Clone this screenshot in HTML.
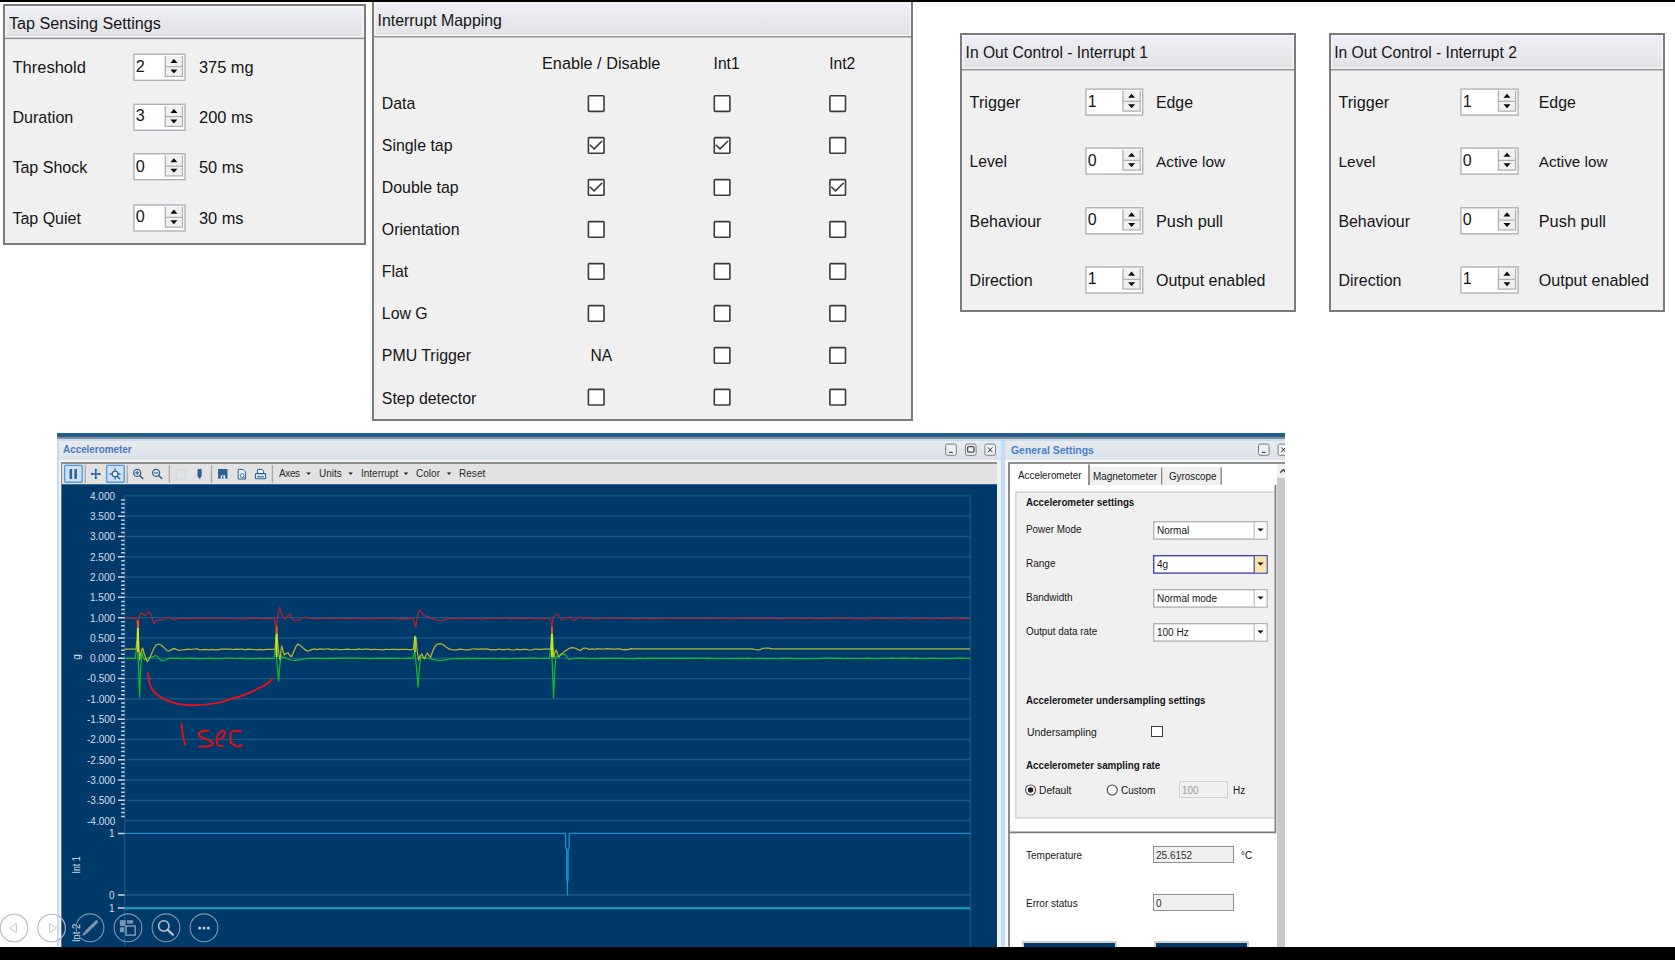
<!DOCTYPE html>
<html><head><meta charset="utf-8"><title>Sensor UI</title>
<style>
html,body{margin:0;padding:0;background:#fff;}
body{width:1675px;height:960px;position:relative;overflow:hidden;font-family:"Liberation Sans",sans-serif;}
.abs{position:absolute;}
.t{position:absolute;white-space:nowrap;line-height:20px;font-family:"Liberation Sans",sans-serif;}
.panel{position:absolute;box-sizing:border-box;border:2px solid #7b7b7b;background:#f0f0f0;}
</style></head><body>
<!-- top panels -->
<div class="panel" style="left:3px;top:4px;width:363px;height:241px;"></div>
<div class="panel" style="left:372px;top:0px;width:541px;height:421px;"></div>
<div class="panel" style="left:960px;top:33px;width:336px;height:279px;"></div>
<div class="panel" style="left:1329px;top:33px;width:336px;height:279px;"></div>
<svg class="abs" style="left:0;top:0" width="1675" height="430" viewBox="0 0 1675 430"><defs><linearGradient id="hg" x1="0" y1="0" x2="0" y2="1"><stop offset="0" stop-color="#eef0f7"/><stop offset="0.5" stop-color="#e8e9ee"/><stop offset="1" stop-color="#e2e2e4"/></linearGradient></defs><rect x="5" y="6" width="359" height="31.70" fill="url(#hg)"/>
<rect x="5.75" y="6.75" width="357.5" height="30.20" fill="none" stroke="#f5f5f8" stroke-width="1.5"/>
<rect x="5" y="37.70" width="359" height="1.4" fill="#8f8f8f"/>
<rect x="133.90" y="54.30" width="51.10" height="26.00" fill="#fff" stroke="#b0b2b8" stroke-width="1.4"/>
<rect x="164.80" y="55.90" width="18.20" height="21.10" fill="#f0f0f0"/>
<path d="M165.30 55.90V76.40H182.50V55.90 M164.80 66.65H183.00" fill="none" stroke="#b2b2b2" stroke-width="1.3"/>
<path d="M170.40 62.95L173.90 58.85L177.40 62.95Z M170.40 69.45L173.90 73.45L177.40 69.45Z" fill="#0c0c0c"/>
<rect x="133.90" y="104.30" width="51.10" height="26.00" fill="#fff" stroke="#b0b2b8" stroke-width="1.4"/>
<rect x="164.80" y="105.90" width="18.20" height="21.10" fill="#f0f0f0"/>
<path d="M165.30 105.90V126.40H182.50V105.90 M164.80 116.65H183.00" fill="none" stroke="#b2b2b2" stroke-width="1.3"/>
<path d="M170.40 112.95L173.90 108.85L177.40 112.95Z M170.40 119.45L173.90 123.45L177.40 119.45Z" fill="#0c0c0c"/>
<rect x="133.90" y="153.70" width="51.10" height="26.00" fill="#fff" stroke="#b0b2b8" stroke-width="1.4"/>
<rect x="164.80" y="155.30" width="18.20" height="21.10" fill="#f0f0f0"/>
<path d="M165.30 155.30V175.80H182.50V155.30 M164.80 166.05H183.00" fill="none" stroke="#b2b2b2" stroke-width="1.3"/>
<path d="M170.40 162.35L173.90 158.25L177.40 162.35Z M170.40 168.85L173.90 172.85L177.40 168.85Z" fill="#0c0c0c"/>
<rect x="133.90" y="205.00" width="51.10" height="26.00" fill="#fff" stroke="#b0b2b8" stroke-width="1.4"/>
<rect x="164.80" y="206.60" width="18.20" height="21.10" fill="#f0f0f0"/>
<path d="M165.30 206.60V227.10H182.50V206.60 M164.80 217.35H183.00" fill="none" stroke="#b2b2b2" stroke-width="1.3"/>
<path d="M170.40 213.65L173.90 209.55L177.40 213.65Z M170.40 220.15L173.90 224.15L177.40 220.15Z" fill="#0c0c0c"/>
<rect x="374" y="2" width="537" height="34.10" fill="url(#hg)"/>
<rect x="374.75" y="2.75" width="535.5" height="32.60" fill="none" stroke="#f5f5f8" stroke-width="1.5"/>
<rect x="374" y="36.10" width="537" height="1.4" fill="#8f8f8f"/>
<rect x="588.40" y="95.80" width="15.60" height="15.60" rx="0.8" fill="#fff" stroke="#3b3b3b" stroke-width="1.6"/>
<rect x="714.30" y="95.80" width="15.60" height="15.60" rx="0.8" fill="#fff" stroke="#3b3b3b" stroke-width="1.6"/>
<rect x="829.90" y="95.80" width="15.60" height="15.60" rx="0.8" fill="#fff" stroke="#3b3b3b" stroke-width="1.6"/>
<rect x="588.40" y="137.60" width="15.60" height="15.60" rx="0.8" fill="#fff" stroke="#3b3b3b" stroke-width="1.6"/>
<path d="M590.30 145.20L594.10 148.90L601.80 141.30" fill="none" stroke="#3b3b3b" stroke-width="1.6" stroke-linecap="round" stroke-linejoin="round"/>
<rect x="714.30" y="137.60" width="15.60" height="15.60" rx="0.8" fill="#fff" stroke="#3b3b3b" stroke-width="1.6"/>
<path d="M716.20 145.20L720.00 148.90L727.70 141.30" fill="none" stroke="#3b3b3b" stroke-width="1.6" stroke-linecap="round" stroke-linejoin="round"/>
<rect x="829.90" y="137.60" width="15.60" height="15.60" rx="0.8" fill="#fff" stroke="#3b3b3b" stroke-width="1.6"/>
<rect x="588.40" y="179.60" width="15.60" height="15.60" rx="0.8" fill="#fff" stroke="#3b3b3b" stroke-width="1.6"/>
<path d="M590.30 187.20L594.10 190.90L601.80 183.30" fill="none" stroke="#3b3b3b" stroke-width="1.6" stroke-linecap="round" stroke-linejoin="round"/>
<rect x="714.30" y="179.60" width="15.60" height="15.60" rx="0.8" fill="#fff" stroke="#3b3b3b" stroke-width="1.6"/>
<rect x="829.90" y="179.60" width="15.60" height="15.60" rx="0.8" fill="#fff" stroke="#3b3b3b" stroke-width="1.6"/>
<path d="M831.80 187.20L835.60 190.90L843.30 183.30" fill="none" stroke="#3b3b3b" stroke-width="1.6" stroke-linecap="round" stroke-linejoin="round"/>
<rect x="588.40" y="221.60" width="15.60" height="15.60" rx="0.8" fill="#fff" stroke="#3b3b3b" stroke-width="1.6"/>
<rect x="714.30" y="221.60" width="15.60" height="15.60" rx="0.8" fill="#fff" stroke="#3b3b3b" stroke-width="1.6"/>
<rect x="829.90" y="221.60" width="15.60" height="15.60" rx="0.8" fill="#fff" stroke="#3b3b3b" stroke-width="1.6"/>
<rect x="588.40" y="263.60" width="15.60" height="15.60" rx="0.8" fill="#fff" stroke="#3b3b3b" stroke-width="1.6"/>
<rect x="714.30" y="263.60" width="15.60" height="15.60" rx="0.8" fill="#fff" stroke="#3b3b3b" stroke-width="1.6"/>
<rect x="829.90" y="263.60" width="15.60" height="15.60" rx="0.8" fill="#fff" stroke="#3b3b3b" stroke-width="1.6"/>
<rect x="588.40" y="305.60" width="15.60" height="15.60" rx="0.8" fill="#fff" stroke="#3b3b3b" stroke-width="1.6"/>
<rect x="714.30" y="305.60" width="15.60" height="15.60" rx="0.8" fill="#fff" stroke="#3b3b3b" stroke-width="1.6"/>
<rect x="829.90" y="305.60" width="15.60" height="15.60" rx="0.8" fill="#fff" stroke="#3b3b3b" stroke-width="1.6"/>
<rect x="714.30" y="347.60" width="15.60" height="15.60" rx="0.8" fill="#fff" stroke="#3b3b3b" stroke-width="1.6"/>
<rect x="829.90" y="347.60" width="15.60" height="15.60" rx="0.8" fill="#fff" stroke="#3b3b3b" stroke-width="1.6"/>
<rect x="588.40" y="389.40" width="15.60" height="15.60" rx="0.8" fill="#fff" stroke="#3b3b3b" stroke-width="1.6"/>
<rect x="714.30" y="389.40" width="15.60" height="15.60" rx="0.8" fill="#fff" stroke="#3b3b3b" stroke-width="1.6"/>
<rect x="829.90" y="389.40" width="15.60" height="15.60" rx="0.8" fill="#fff" stroke="#3b3b3b" stroke-width="1.6"/>
<rect x="962" y="35" width="332" height="34.00" fill="url(#hg)"/>
<rect x="962.75" y="35.75" width="330.5" height="32.50" fill="none" stroke="#f5f5f8" stroke-width="1.5"/>
<rect x="962" y="69.00" width="332" height="1.4" fill="#8f8f8f"/>
<rect x="1085.90" y="89.10" width="56.80" height="26.00" fill="#fff" stroke="#b0b2b8" stroke-width="1.4"/>
<rect x="1122.50" y="90.70" width="18.20" height="21.10" fill="#f0f0f0"/>
<path d="M1123.00 90.70V111.20H1140.20V90.70 M1122.50 101.45H1140.70" fill="none" stroke="#b2b2b2" stroke-width="1.3"/>
<path d="M1128.10 97.75L1131.60 93.65L1135.10 97.75Z M1128.10 104.25L1131.60 108.25L1135.10 104.25Z" fill="#0c0c0c"/>
<rect x="1085.90" y="148.10" width="56.80" height="26.00" fill="#fff" stroke="#b0b2b8" stroke-width="1.4"/>
<rect x="1122.50" y="149.70" width="18.20" height="21.10" fill="#f0f0f0"/>
<path d="M1123.00 149.70V170.20H1140.20V149.70 M1122.50 160.45H1140.70" fill="none" stroke="#b2b2b2" stroke-width="1.3"/>
<path d="M1128.10 156.75L1131.60 152.65L1135.10 156.75Z M1128.10 163.25L1131.60 167.25L1135.10 163.25Z" fill="#0c0c0c"/>
<rect x="1085.90" y="207.80" width="56.80" height="26.00" fill="#fff" stroke="#b0b2b8" stroke-width="1.4"/>
<rect x="1122.50" y="209.40" width="18.20" height="21.10" fill="#f0f0f0"/>
<path d="M1123.00 209.40V229.90H1140.20V209.40 M1122.50 220.15H1140.70" fill="none" stroke="#b2b2b2" stroke-width="1.3"/>
<path d="M1128.10 216.45L1131.60 212.35L1135.10 216.45Z M1128.10 222.95L1131.60 226.95L1135.10 222.95Z" fill="#0c0c0c"/>
<rect x="1085.90" y="267.00" width="56.80" height="26.00" fill="#fff" stroke="#b0b2b8" stroke-width="1.4"/>
<rect x="1122.50" y="268.60" width="18.20" height="21.10" fill="#f0f0f0"/>
<path d="M1123.00 268.60V289.10H1140.20V268.60 M1122.50 279.35H1140.70" fill="none" stroke="#b2b2b2" stroke-width="1.3"/>
<path d="M1128.10 275.65L1131.60 271.55L1135.10 275.65Z M1128.10 282.15L1131.60 286.15L1135.10 282.15Z" fill="#0c0c0c"/>
<rect x="1331" y="35" width="332" height="34.00" fill="url(#hg)"/>
<rect x="1331.75" y="35.75" width="330.5" height="32.50" fill="none" stroke="#f5f5f8" stroke-width="1.5"/>
<rect x="1331" y="69.00" width="332" height="1.4" fill="#8f8f8f"/>
<rect x="1460.90" y="89.10" width="57.20" height="26.00" fill="#fff" stroke="#b0b2b8" stroke-width="1.4"/>
<rect x="1497.90" y="90.70" width="18.20" height="21.10" fill="#f0f0f0"/>
<path d="M1498.40 90.70V111.20H1515.60V90.70 M1497.90 101.45H1516.10" fill="none" stroke="#b2b2b2" stroke-width="1.3"/>
<path d="M1503.50 97.75L1507.00 93.65L1510.50 97.75Z M1503.50 104.25L1507.00 108.25L1510.50 104.25Z" fill="#0c0c0c"/>
<rect x="1460.90" y="148.10" width="57.20" height="26.00" fill="#fff" stroke="#b0b2b8" stroke-width="1.4"/>
<rect x="1497.90" y="149.70" width="18.20" height="21.10" fill="#f0f0f0"/>
<path d="M1498.40 149.70V170.20H1515.60V149.70 M1497.90 160.45H1516.10" fill="none" stroke="#b2b2b2" stroke-width="1.3"/>
<path d="M1503.50 156.75L1507.00 152.65L1510.50 156.75Z M1503.50 163.25L1507.00 167.25L1510.50 163.25Z" fill="#0c0c0c"/>
<rect x="1460.90" y="207.80" width="57.20" height="26.00" fill="#fff" stroke="#b0b2b8" stroke-width="1.4"/>
<rect x="1497.90" y="209.40" width="18.20" height="21.10" fill="#f0f0f0"/>
<path d="M1498.40 209.40V229.90H1515.60V209.40 M1497.90 220.15H1516.10" fill="none" stroke="#b2b2b2" stroke-width="1.3"/>
<path d="M1503.50 216.45L1507.00 212.35L1510.50 216.45Z M1503.50 222.95L1507.00 226.95L1510.50 222.95Z" fill="#0c0c0c"/>
<rect x="1460.90" y="267.00" width="57.20" height="26.00" fill="#fff" stroke="#b0b2b8" stroke-width="1.4"/>
<rect x="1497.90" y="268.60" width="18.20" height="21.10" fill="#f0f0f0"/>
<path d="M1498.40 268.60V289.10H1515.60V268.60 M1497.90 279.35H1516.10" fill="none" stroke="#b2b2b2" stroke-width="1.3"/>
<path d="M1503.50 275.65L1507.00 271.55L1510.50 275.65Z M1503.50 282.15L1507.00 286.15L1510.50 282.15Z" fill="#0c0c0c"/></svg>
<span class="t" style="left:9.00px;top:14px;font-size:16.18px;line-height:18px;color:#151515;">Tap Sensing Settings</span>
<span class="t" style="left:12.40px;top:58px;font-size:16.55px;line-height:19px;color:#151515;">Threshold</span>
<span class="t" style="left:135.80px;top:57px;font-size:16.20px;line-height:18px;color:#151515;">2</span>
<span class="t" style="left:199.00px;top:58px;font-size:16.37px;line-height:18px;color:#151515;">375 mg</span>
<span class="t" style="left:12.40px;top:108px;font-size:16.14px;line-height:18px;color:#151515;">Duration</span>
<span class="t" style="left:135.80px;top:106px;font-size:16.20px;line-height:18px;color:#151515;">3</span>
<span class="t" style="left:199.00px;top:108px;font-size:16.47px;line-height:18px;color:#151515;">200 ms</span>
<span class="t" style="left:12.40px;top:158px;font-size:16.06px;line-height:18px;color:#151515;">Tap Shock</span>
<span class="t" style="left:135.80px;top:157px;font-size:16.20px;line-height:18px;color:#151515;">0</span>
<span class="t" style="left:199.00px;top:158px;font-size:16.38px;line-height:18px;color:#151515;">50 ms</span>
<span class="t" style="left:12.40px;top:209px;font-size:16.03px;line-height:18px;color:#151515;">Tap Quiet</span>
<span class="t" style="left:135.80px;top:207px;font-size:16.20px;line-height:18px;color:#151515;">0</span>
<span class="t" style="left:199.00px;top:209px;font-size:16.38px;line-height:18px;color:#151515;">30 ms</span>
<span class="t" style="left:377.60px;top:12px;font-size:15.87px;line-height:17px;color:#151515;">Interrupt Mapping</span>
<span class="t" style="left:542.00px;top:54px;font-size:16.26px;line-height:18px;color:#151515;">Enable / Disable</span>
<span class="t" style="left:713.60px;top:55px;font-size:15.60px;line-height:17px;color:#151515;">Int1</span>
<span class="t" style="left:829.20px;top:55px;font-size:15.60px;line-height:17px;color:#151515;">Int2</span>
<span class="t" style="left:381.80px;top:95px;font-size:15.90px;line-height:17px;color:#151515;">Data</span>
<span class="t" style="left:381.80px;top:137px;font-size:15.90px;line-height:17px;color:#151515;">Single tap</span>
<span class="t" style="left:381.80px;top:179px;font-size:15.90px;line-height:17px;color:#151515;">Double tap</span>
<span class="t" style="left:381.80px;top:221px;font-size:15.90px;line-height:17px;color:#151515;">Orientation</span>
<span class="t" style="left:381.80px;top:263px;font-size:15.90px;line-height:17px;color:#151515;">Flat</span>
<span class="t" style="left:381.80px;top:305px;font-size:15.90px;line-height:17px;color:#151515;">Low G</span>
<span class="t" style="left:381.80px;top:347px;font-size:15.90px;line-height:17px;color:#151515;">PMU Trigger</span>
<span class="t" style="left:590.40px;top:347px;font-size:15.60px;line-height:17px;color:#151515;">NA</span>
<span class="t" style="left:381.80px;top:390px;font-size:15.90px;line-height:17px;color:#151515;">Step detector</span>
<span class="t" style="left:965.60px;top:44px;font-size:15.63px;line-height:17px;color:#151515;">In Out Control - Interrupt 1</span>
<span class="t" style="left:969.60px;top:93px;font-size:16.23px;line-height:18px;color:#151515;">Trigger</span>
<span class="t" style="left:1087.80px;top:93px;font-size:16.00px;line-height:17px;color:#151515;">1</span>
<span class="t" style="left:1156.00px;top:94px;font-size:15.84px;line-height:17px;color:#151515;">Edge</span>
<span class="t" style="left:969.60px;top:153px;font-size:15.64px;line-height:17px;color:#151515;">Level</span>
<span class="t" style="left:1087.80px;top:152px;font-size:16.00px;line-height:17px;color:#151515;">0</span>
<span class="t" style="left:1156.00px;top:153px;font-size:15.33px;line-height:17px;color:#151515;">Active low</span>
<span class="t" style="left:969.60px;top:213px;font-size:15.95px;line-height:17px;color:#151515;">Behaviour</span>
<span class="t" style="left:1087.80px;top:211px;font-size:16.00px;line-height:17px;color:#151515;">0</span>
<span class="t" style="left:1156.00px;top:212px;font-size:16.29px;line-height:18px;color:#151515;">Push pull</span>
<span class="t" style="left:969.60px;top:272px;font-size:15.97px;line-height:17px;color:#151515;">Direction</span>
<span class="t" style="left:1087.80px;top:270px;font-size:16.00px;line-height:17px;color:#151515;">1</span>
<span class="t" style="left:1156.00px;top:271px;font-size:16.03px;line-height:18px;color:#151515;">Output enabled</span>
<span class="t" style="left:1334.20px;top:44px;font-size:15.66px;line-height:17px;color:#151515;">In Out Control - Interrupt 2</span>
<span class="t" style="left:1338.40px;top:93px;font-size:16.23px;line-height:18px;color:#151515;">Trigger</span>
<span class="t" style="left:1462.80px;top:93px;font-size:16.00px;line-height:17px;color:#151515;">1</span>
<span class="t" style="left:1538.70px;top:94px;font-size:15.93px;line-height:17px;color:#151515;">Edge</span>
<span class="t" style="left:1338.40px;top:153px;font-size:15.56px;line-height:17px;color:#151515;">Level</span>
<span class="t" style="left:1462.80px;top:152px;font-size:16.00px;line-height:17px;color:#151515;">0</span>
<span class="t" style="left:1538.70px;top:153px;font-size:15.31px;line-height:17px;color:#151515;">Active low</span>
<span class="t" style="left:1338.40px;top:213px;font-size:15.90px;line-height:17px;color:#151515;">Behaviour</span>
<span class="t" style="left:1462.80px;top:211px;font-size:16.00px;line-height:17px;color:#151515;">0</span>
<span class="t" style="left:1538.70px;top:212px;font-size:16.36px;line-height:18px;color:#151515;">Push pull</span>
<span class="t" style="left:1338.40px;top:272px;font-size:15.97px;line-height:17px;color:#151515;">Direction</span>
<span class="t" style="left:1462.80px;top:270px;font-size:16.00px;line-height:17px;color:#151515;">1</span>
<span class="t" style="left:1538.70px;top:271px;font-size:16.13px;line-height:18px;color:#151515;">Output enabled</span>
<!-- bottom window -->
<div class="abs" style="left:57px;top:433px;width:1228px;height:4.4px;background:#1f5e8e;"></div>
<div class="abs" style="left:57px;top:437.2px;width:1228px;height:1.6px;background:#8c8f92;"></div>
<div class="abs" style="left:57px;top:438.8px;width:1228px;height:2.4px;background:#c3dcfb;"></div>
<div class="abs" style="left:57px;top:441px;width:1228px;height:19px;background:linear-gradient(#e8ebef,#dbe2ea);"></div>
<div class="abs" style="left:57px;top:460px;width:1228px;height:487px;background:#f4f4f4;"></div>
<div class="abs" style="left:57px;top:439px;width:1.8px;height:508px;background:#c3dcfb;"></div>
<div class="abs" style="left:58.8px;top:460px;width:2.2px;height:487px;background:#f3f3f3;"></div>
<!-- toolbar + chart -->
<div class="abs" style="left:61px;top:462.4px;width:936.4px;height:22px;background:#e2e2e2;border-top:2px solid #8d8d8d;border-left:1px solid #868686;box-sizing:border-box;"></div>
<div class="abs" style="left:61px;top:484px;width:936.4px;height:463px;background:#003a6b;border-left:1.4px solid #5a7690;box-sizing:border-box;"></div>
<div class="abs" style="left:62px;top:484px;width:935px;height:1.2px;background:#3a6890;"></div>
<svg class="abs" style="left:0;top:0" width="1675" height="960" viewBox="0 0 1675 960">
<path d="M124.6 495.90H970.4 M124.6 516.19H970.4 M124.6 536.49H970.4 M124.6 556.78H970.4 M124.6 577.08H970.4 M124.6 597.37H970.4 M124.6 617.66H970.4 M124.6 637.96H970.4 M124.6 658.25H970.4 M124.6 678.54H970.4 M124.6 698.84H970.4 M124.6 719.13H970.4 M124.6 739.42H970.4 M124.6 759.72H970.4 M124.6 780.01H970.4 M124.6 800.31H970.4 M124.6 820.60H970.4" stroke="#1e5883" stroke-width="1.3" fill="none"/>
<path d="M124.7 496V947 M970.2 496V947" stroke="#1f5a8a" stroke-width="1.1" fill="none"/>
<path d="M124.6 895H970.4" stroke="#1e5883" stroke-width="1.3" fill="none"/>
<path d="M121.2 499.96H124.6 M121.2 504.02H124.6 M121.2 508.08H124.6 M121.2 512.13H124.6 M121.2 520.25H124.6 M121.2 524.31H124.6 M121.2 528.37H124.6 M121.2 532.43H124.6 M121.2 540.55H124.6 M121.2 544.61H124.6 M121.2 548.66H124.6 M121.2 552.72H124.6 M121.2 560.84H124.6 M121.2 564.90H124.6 M121.2 568.96H124.6 M121.2 573.02H124.6 M121.2 581.13H124.6 M121.2 585.19H124.6 M121.2 589.25H124.6 M121.2 593.31H124.6 M121.2 601.43H124.6 M121.2 605.49H124.6 M121.2 609.54H124.6 M121.2 613.60H124.6 M121.2 621.72H124.6 M121.2 625.78H124.6 M121.2 629.84H124.6 M121.2 633.90H124.6 M121.2 642.01H124.6 M121.2 646.07H124.6 M121.2 650.13H124.6 M121.2 654.19H124.6 M121.2 662.31H124.6 M121.2 666.37H124.6 M121.2 670.43H124.6 M121.2 674.49H124.6 M121.2 682.60H124.6 M121.2 686.66H124.6 M121.2 690.72H124.6 M121.2 694.78H124.6 M121.2 702.90H124.6 M121.2 706.95H124.6 M121.2 711.01H124.6 M121.2 715.07H124.6 M121.2 723.19H124.6 M121.2 727.25H124.6 M121.2 731.31H124.6 M121.2 735.37H124.6 M121.2 743.48H124.6 M121.2 747.54H124.6 M121.2 751.60H124.6 M121.2 755.66H124.6 M121.2 763.78H124.6 M121.2 767.84H124.6 M121.2 771.89H124.6 M121.2 775.95H124.6 M121.2 784.07H124.6 M121.2 788.13H124.6 M121.2 792.19H124.6 M121.2 796.25H124.6 M121.2 804.37H124.6 M121.2 808.42H124.6 M121.2 812.48H124.6 M121.2 816.54H124.6" stroke="#ccd8e4" stroke-width="1.5" fill="none"/>
<path d="M117.9 516.19H124.6 M117.9 536.49H124.6 M117.9 556.78H124.6 M117.9 577.08H124.6 M117.9 597.37H124.6 M117.9 617.66H124.6 M117.9 637.96H124.6 M117.9 658.25H124.6 M117.9 678.54H124.6 M117.9 698.84H124.6 M117.9 719.13H124.6 M117.9 739.42H124.6 M117.9 759.72H124.6 M117.9 780.01H124.6 M117.9 800.31H124.6" stroke="#ccd8e4" stroke-width="1.5" fill="none"/>
<path d="M117.9 833.4H124.6 M117.9 895H124.6 M117.9 908H124.6" stroke="#ccd8e4" stroke-width="1.5" fill="none"/>
<path d="M124.6 618.0 L135.5 618.0 L136.6 621.0 L137.4 626.5 L139.0 618.0 L141.0 612.5 L143.0 614.0 L145.0 615.5 L147.0 613.5 L149.0 611.6 L151.0 614.0 L152.5 620.0 L154.0 623.4 L156.0 621.0 L158.0 620.5 L161.0 619.6 L164.0 620.0 L168.0 617.0 L171.0 618.6 L175.0 619.6 L178.0 618.6 L181.0 618.4 L184.0 618.3 L187.0 618.8 L190.0 618.2 L193.0 618.6 L196.0 618.5 L199.0 618.2 L202.0 618.6 L205.0 618.1 L208.0 618.5 L211.0 618.2 L214.0 618.2 L217.0 618.5 L220.0 618.9 L223.0 618.2 L226.0 618.3 L229.0 618.7 L232.0 619.0 L235.0 618.7 L238.0 618.5 L241.0 619.1 L244.0 618.1 L247.0 619.0 L250.0 618.4 L253.0 618.2 L256.0 618.2 L259.0 618.4 L262.0 618.9 L265.0 618.3 L268.0 618.7 L271.0 618.7 L274.0 618.0 L275.4 624.0 L276.4 629.0 L277.6 616.0 L279.6 607.6 L281.4 613.0 L283.0 617.0 L285.0 619.0 L287.6 616.0 L290.0 614.0 L292.0 618.0 L294.0 620.8 L297.0 620.4 L300.0 619.4 L303.0 618.0 L306.0 617.0 L310.0 618.2 L315.0 618.8 L318.0 618.4 L321.0 618.5 L324.0 618.1 L327.0 618.1 L330.0 618.2 L333.0 618.7 L336.0 618.4 L339.0 618.3 L342.0 618.6 L345.0 618.5 L348.0 618.3 L351.0 618.8 L354.0 618.7 L357.0 618.2 L360.0 618.6 L363.0 618.5 L366.0 618.9 L369.0 618.7 L372.0 618.3 L375.0 619.0 L378.0 618.1 L381.0 618.4 L384.0 618.8 L387.0 618.2 L390.0 618.5 L393.0 618.0 L396.0 618.7 L399.0 618.8 L402.0 618.6 L405.0 618.9 L408.0 618.3 L411.0 618.7 L413.0 618.0 L414.6 623.0 L415.8 627.4 L417.0 617.0 L419.4 610.0 L421.0 611.6 L423.0 614.4 L425.4 616.0 L428.0 616.6 L431.0 618.4 L435.0 619.4 L438.0 620.0 L442.0 621.0 L445.0 619.6 L448.0 618.4 L451.0 618.6 L454.0 618.6 L457.0 618.5 L460.0 618.8 L463.0 618.9 L466.0 618.5 L469.0 618.7 L472.0 618.1 L475.0 618.7 L478.0 618.6 L481.0 619.0 L484.0 618.8 L487.0 618.3 L490.0 618.4 L493.0 618.7 L496.0 618.0 L499.0 618.5 L502.0 618.2 L505.0 618.1 L508.0 618.1 L511.0 618.8 L514.0 618.1 L517.0 618.2 L520.0 618.4 L523.0 618.9 L526.0 618.1 L529.0 618.4 L532.0 618.5 L535.0 618.9 L538.0 618.8 L541.0 618.9 L544.0 618.3 L547.0 618.4 L549.0 618.0 L550.6 621.0 L551.8 626.0 L553.0 619.0 L555.0 614.6 L557.0 614.0 L559.0 616.0 L561.0 619.4 L563.0 620.0 L566.0 618.4 L570.0 617.0 L572.0 619.0 L574.0 620.8 L577.0 618.0 L579.0 617.0 L583.0 618.4 L588.0 617.6 L591.0 618.3 L594.0 618.7 L597.0 618.8 L600.0 618.1 L603.0 618.1 L606.0 618.2 L609.0 618.2 L612.0 618.4 L615.0 618.5 L618.0 618.2 L621.0 618.0 L624.0 618.3 L627.0 618.3 L630.0 618.5 L633.0 618.8 L636.0 618.6 L639.0 618.4 L642.0 618.5 L645.0 618.6 L648.0 618.0 L651.0 618.8 L654.0 618.7 L657.0 618.7 L660.0 618.7 L663.0 618.3 L666.0 618.3 L669.0 618.0 L672.0 618.5 L675.0 618.0 L678.0 618.0 L681.0 618.1 L684.0 618.1 L687.0 618.3 L690.0 618.0 L693.0 618.0 L696.0 618.1 L699.0 618.0 L702.0 618.3 L705.0 618.0 L708.0 618.7 L711.0 618.5 L714.0 618.1 L717.0 618.2 L720.0 618.3 L723.0 618.3 L726.0 618.1 L729.0 618.7 L732.0 618.8 L735.0 618.4 L738.0 618.4 L741.0 618.0 L744.0 618.0 L747.0 618.3 L750.0 618.2 L753.0 618.7 L756.0 618.1 L759.0 618.0 L762.0 618.8 L765.0 618.4 L768.0 618.1 L771.0 618.4 L774.0 618.0 L777.0 618.4 L780.0 618.8 L783.0 618.7 L786.0 618.6 L789.0 618.2 L792.0 618.3 L795.0 618.1 L798.0 618.6 L801.0 618.4 L804.0 618.7 L807.0 618.2 L810.0 618.2 L813.0 618.7 L816.0 618.8 L819.0 618.7 L822.0 618.7 L825.0 618.7 L828.0 618.6 L831.0 618.2 L834.0 618.4 L837.0 618.3 L840.0 618.0 L843.0 618.0 L846.0 618.2 L849.0 618.2 L852.0 618.6 L855.0 618.8 L858.0 618.4 L861.0 618.8 L864.0 618.8 L867.0 618.8 L870.0 618.3 L873.0 618.1 L876.0 618.2 L879.0 618.1 L882.0 618.1 L885.0 618.5 L888.0 618.8 L891.0 618.7 L894.0 618.4 L897.0 618.5 L900.0 618.7 L903.0 618.0 L906.0 618.5 L909.0 618.8 L912.0 618.7 L915.0 618.6 L918.0 618.4 L921.0 618.1 L924.0 618.7 L927.0 618.2 L930.0 618.7 L933.0 618.8 L936.0 618.3 L939.0 618.3 L942.0 618.8 L945.0 618.6 L948.0 618.1 L951.0 618.1 L954.0 618.1 L957.0 618.8 L960.0 618.7 L963.0 618.1 L966.0 618.7 L970.2 618.4" stroke="#b5202f" stroke-width="1.25" fill="none" stroke-linejoin="round"/>
<path d="M124.6 658.4 L135.4 658.4 L136.4 648.0 L137.2 640.0 L138.2 660.0 L139.6 697.0 L140.6 670.0 L142.0 652.0 L143.4 658.0 L145.0 660.0 L148.0 658.0 L152.0 657.0 L155.0 655.6 L157.0 656.0 L159.4 659.0 L162.0 661.0 L165.0 660.0 L168.0 658.6 L172.0 658.0 L175.0 658.3 L179.0 658.1 L183.0 658.6 L187.0 658.3 L191.0 658.2 L195.0 658.4 L199.0 658.6 L203.0 658.6 L207.0 658.3 L211.0 658.2 L215.0 658.7 L219.0 658.4 L223.0 658.5 L227.0 658.2 L231.0 658.1 L235.0 658.5 L239.0 658.4 L243.0 658.1 L247.0 658.7 L251.0 658.5 L255.0 658.6 L259.0 658.2 L263.0 658.6 L267.0 658.1 L271.0 658.6 L274.0 658.4 L275.0 650.0 L275.8 645.0 L276.8 660.0 L278.6 681.0 L279.6 668.0 L281.0 655.0 L282.4 658.0 L284.0 657.0 L287.0 658.6 L291.0 660.0 L295.0 660.4 L300.0 659.6 L305.0 659.0 L310.0 658.4 L313.0 658.4 L317.0 658.3 L321.0 658.4 L325.0 658.7 L329.0 658.3 L333.0 658.2 L337.0 658.4 L341.0 658.2 L345.0 658.2 L349.0 658.2 L353.0 658.1 L357.0 658.2 L361.0 658.3 L365.0 658.3 L369.0 658.6 L373.0 658.3 L377.0 658.4 L381.0 658.2 L385.0 658.3 L389.0 658.1 L393.0 658.3 L397.0 658.1 L401.0 658.5 L405.0 658.4 L409.0 658.2 L413.0 658.4 L414.0 654.0 L414.8 651.0 L416.0 662.0 L418.0 687.0 L419.0 672.0 L420.6 656.0 L422.0 658.0 L425.0 657.6 L430.0 658.6 L435.0 659.8 L440.0 660.6 L445.0 659.8 L450.0 659.0 L456.0 658.6 L460.0 658.4 L464.0 658.7 L468.0 658.2 L472.0 658.6 L476.0 658.4 L480.0 658.4 L484.0 658.6 L488.0 658.3 L492.0 658.4 L496.0 658.5 L500.0 658.7 L504.0 658.3 L508.0 658.6 L512.0 658.5 L516.0 658.5 L520.0 658.3 L524.0 658.3 L528.0 658.1 L532.0 658.2 L536.0 658.1 L540.0 658.5 L544.0 658.3 L549.6 658.4 L550.4 650.0 L551.2 645.0 L552.2 662.0 L553.6 698.0 L554.6 672.0 L556.0 656.0 L558.0 657.0 L561.0 655.0 L565.0 654.4 L567.0 657.0 L568.6 659.4 L572.0 659.0 L576.0 658.4 L580.0 658.2 L584.0 658.2 L588.0 658.6 L592.0 658.6 L596.0 658.5 L600.0 658.3 L604.0 658.2 L608.0 658.3 L612.0 658.4 L616.0 658.2 L620.0 658.4 L624.0 658.3 L628.0 658.7 L632.0 658.7 L636.0 658.4 L640.0 658.2 L644.0 658.7 L648.0 658.3 L652.0 658.3 L656.0 658.1 L660.0 658.3 L664.0 658.4 L668.0 658.4 L672.0 658.2 L676.0 658.4 L680.0 658.1 L684.0 658.3 L688.0 658.2 L692.0 658.3 L696.0 658.1 L700.0 658.1 L704.0 658.3 L708.0 658.2 L712.0 658.5 L716.0 658.4 L720.0 658.6 L724.0 658.5 L728.0 658.5 L732.0 658.6 L736.0 658.3 L740.0 658.3 L744.0 658.7 L748.0 658.2 L752.0 658.5 L756.0 658.5 L760.0 658.1 L764.0 658.6 L768.0 658.6 L772.0 658.5 L776.0 658.5 L780.0 658.6 L784.0 658.2 L788.0 658.4 L792.0 658.4 L796.0 658.6 L800.0 658.6 L804.0 658.6 L808.0 658.5 L812.0 658.6 L816.0 658.5 L820.0 658.5 L824.0 658.2 L828.0 658.1 L832.0 658.2 L836.0 658.3 L840.0 658.2 L844.0 658.6 L848.0 658.4 L852.0 658.5 L856.0 658.5 L860.0 658.5 L864.0 658.4 L868.0 658.1 L872.0 658.6 L876.0 658.5 L880.0 658.4 L884.0 658.4 L888.0 658.5 L892.0 658.1 L896.0 658.5 L900.0 658.3 L904.0 658.1 L908.0 658.3 L912.0 658.5 L916.0 658.2 L920.0 658.5 L924.0 658.7 L928.0 658.4 L932.0 658.3 L936.0 658.4 L940.0 658.5 L944.0 658.6 L948.0 658.5 L952.0 658.5 L956.0 658.1 L960.0 658.2 L964.0 658.3 L968.0 658.5 L970.2 658.4" stroke="#12be28" stroke-width="1.2" fill="none" stroke-linejoin="round"/>
<path d="M124.6 649.2 L136.0 649.2 L137.0 640.0 L137.8 621.0 L138.6 640.0 L139.6 660.0 L141.0 652.0 L142.6 648.0 L144.0 653.0 L145.6 658.0 L147.2 661.6 L149.0 659.6 L151.0 655.0 L153.6 649.0 L156.0 645.0 L158.4 644.0 L161.0 645.0 L164.0 647.6 L167.0 650.6 L169.0 651.0 L171.6 649.6 L174.0 648.4 L177.0 649.6 L179.0 650.4 L182.0 650.0 L185.0 649.6 L188.0 649.2 L191.0 649.5 L194.0 649.0 L197.0 648.8 L200.0 650.0 L203.0 649.6 L206.0 649.4 L209.0 649.9 L212.0 649.3 L215.0 649.8 L218.0 649.8 L221.0 649.1 L224.0 649.1 L227.0 649.2 L230.0 649.1 L233.0 649.5 L236.0 649.1 L239.0 649.3 L242.0 649.0 L245.0 649.9 L248.0 649.2 L251.0 649.3 L254.0 649.5 L257.0 649.9 L260.0 649.3 L263.0 649.9 L266.0 649.4 L269.0 649.4 L272.0 649.4 L275.0 649.2 L275.8 640.0 L276.6 627.0 L277.4 640.0 L279.0 655.0 L280.0 660.0 L281.0 650.0 L281.8 646.0 L283.0 651.0 L284.2 655.0 L286.0 653.4 L288.0 653.0 L290.0 655.6 L291.6 656.6 L293.6 652.0 L296.0 646.4 L298.0 644.0 L300.4 645.6 L303.0 648.0 L306.0 650.4 L308.4 651.2 L311.0 649.8 L314.0 648.8 L317.0 649.6 L320.0 648.8 L323.0 649.3 L326.0 649.0 L329.0 648.8 L332.0 649.8 L335.0 649.0 L338.0 649.4 L341.0 649.7 L344.0 649.5 L347.0 649.2 L350.0 649.4 L353.0 649.5 L356.0 649.7 L359.0 648.9 L362.0 649.5 L365.0 649.1 L368.0 649.1 L371.0 649.7 L374.0 649.4 L377.0 649.5 L380.0 649.7 L383.0 649.9 L386.0 649.3 L389.0 649.5 L392.0 649.4 L395.0 649.4 L398.0 649.6 L401.0 649.3 L404.0 649.4 L407.0 649.4 L410.0 649.9 L413.4 649.2 L414.2 642.0 L415.0 636.0 L416.0 638.0 L417.0 650.0 L418.6 660.0 L420.0 656.0 L422.0 654.0 L423.2 657.0 L424.4 659.0 L426.0 655.0 L427.4 653.0 L429.0 655.6 L430.6 657.4 L432.4 652.0 L434.6 647.0 L437.0 644.4 L440.0 643.6 L443.0 644.6 L446.0 647.0 L448.6 648.6 L451.0 649.6 L454.0 649.9 L457.0 649.9 L460.0 649.1 L463.0 649.5 L466.0 649.9 L469.0 649.8 L472.0 649.0 L475.0 648.9 L478.0 649.3 L481.0 648.9 L484.0 649.1 L487.0 648.9 L490.0 649.6 L493.0 649.7 L496.0 649.9 L499.0 649.0 L502.0 649.7 L505.0 649.6 L508.0 649.0 L511.0 649.9 L514.0 650.0 L517.0 649.1 L520.0 649.9 L523.0 649.3 L526.0 649.4 L529.0 650.0 L532.0 649.8 L535.0 649.0 L538.0 649.3 L541.0 649.4 L544.0 649.2 L547.0 649.0 L550.4 649.2 L551.2 640.0 L552.0 627.0 L552.8 642.0 L553.8 658.0 L555.0 652.0 L556.2 650.0 L557.6 654.0 L559.0 657.0 L561.0 654.0 L563.0 653.0 L566.0 650.4 L569.0 648.4 L572.0 647.6 L575.0 648.0 L578.0 649.6 L580.4 650.4 L583.0 648.4 L586.0 648.0 L589.0 649.4 L592.0 648.9 L595.0 649.3 L598.0 648.6 L601.0 649.2 L604.0 649.0 L607.0 648.6 L610.0 648.9 L613.0 649.2 L616.0 649.1 L619.0 648.6 L622.0 649.6 L625.0 649.4 L628.0 649.6 L631.0 648.7 L634.0 648.9 L752.0 648.9 L755.0 649.5 L757.5 649.9 L760.0 649.6 L763.0 648.3 L766.0 648.0 L769.0 648.2 L771.5 648.8 L774.0 648.8 L970.2 648.8" stroke="#b6b534" stroke-width="1.25" fill="none" stroke-linejoin="round"/>
<path d="M138 621V628" stroke="#e8541c" stroke-width="1.8" fill="none"/>
<path d="M138 628V652" stroke="#c8f020" stroke-width="1.8" fill="none"/>
<path d="M276.6 627V634" stroke="#e8541c" stroke-width="1.8" fill="none"/>
<path d="M276.6 634V657" stroke="#c8f020" stroke-width="1.8" fill="none"/>
<path d="M552 627V634" stroke="#e8541c" stroke-width="1.8" fill="none"/>
<path d="M552 634V657" stroke="#c8f020" stroke-width="1.8" fill="none"/>
<path d="M415 637V652" stroke="#c8f020" stroke-width="1.5" fill="none"/>
<path d="M124.6 833.4H565.6V847.4L566.7 849.2V880.4L567.4 881.4V895V881.4L568.1 880.4V849.2L569.2 847.4V833.4H970.4" stroke="#1791cd" stroke-width="1.3" fill="none" stroke-linejoin="round"/>
<path d="M124.6 908.2H970.4" stroke="#10a4c2" stroke-width="2" fill="none"/>
<path d="M148 673 C148.5 680 150 688 155 693 C162 699 172 704 186 705 C198 705.6 210 704.6 220 702.4 C226 701.4 228 699 234 698 C244 696 254 690.6 264 685.6 C268 683.4 271 681 272.4 678.6" stroke="#e5121a" stroke-width="1.9" fill="none" stroke-linecap="round" stroke-linejoin="round"/>
<path d="M181.6 724 C182 730 183 738 185 744.6 M208.1 730.8 C205 730.4 201 731 199.2 732.8 C197.6 735 200 737 203 738 C207 739.4 212 741 213 743.6 C213 746 209 746.6 199.6 746.5 M219.4 739.6 C222 738.4 224.4 736 224.8 733.4 C225 731 223.6 730.4 222 731.2 C219.4 732.6 217 736 216.6 739.6 C216.4 743 217.6 745.4 220 746 C221.4 746.2 222 746 222.8 746 M241.2 731.5 C238 730.6 234 730.6 231.8 732 C230 734 230.2 738 230.6 741.6 C231 744 233 744.6 234.4 745 C235.6 746.4 237 746.8 239 746.2 C240.4 745.8 241 745.6 241.8 745.3" stroke="#e60f14" stroke-width="2.0" fill="none" stroke-linecap="round" stroke-linejoin="round"/>
</svg>
<span class="t" style="left:89.90px;top:491px;font-size:10.47px;line-height:11px;color:#d3dde8;transform:scaleX(0.9575);transform-origin:0 0;">4.000</span>
<span class="t" style="left:89.90px;top:511px;font-size:10.47px;line-height:11px;color:#d3dde8;transform:scaleX(0.9575);transform-origin:0 0;">3.500</span>
<span class="t" style="left:89.90px;top:531px;font-size:10.47px;line-height:11px;color:#d3dde8;transform:scaleX(0.9575);transform-origin:0 0;">3.000</span>
<span class="t" style="left:89.90px;top:552px;font-size:10.47px;line-height:11px;color:#d3dde8;transform:scaleX(0.9575);transform-origin:0 0;">2.500</span>
<span class="t" style="left:89.90px;top:572px;font-size:10.47px;line-height:11px;color:#d3dde8;transform:scaleX(0.9575);transform-origin:0 0;">2.000</span>
<span class="t" style="left:89.90px;top:592px;font-size:10.47px;line-height:11px;color:#d3dde8;transform:scaleX(0.9575);transform-origin:0 0;">1.500</span>
<span class="t" style="left:89.90px;top:613px;font-size:10.47px;line-height:11px;color:#d3dde8;transform:scaleX(0.9575);transform-origin:0 0;">1.000</span>
<span class="t" style="left:89.90px;top:633px;font-size:10.47px;line-height:11px;color:#d3dde8;transform:scaleX(0.9575);transform-origin:0 0;">0.500</span>
<span class="t" style="left:89.90px;top:653px;font-size:10.47px;line-height:11px;color:#d3dde8;transform:scaleX(0.9575);transform-origin:0 0;">0.000</span>
<span class="t" style="left:86.56px;top:673px;font-size:10.47px;line-height:11px;color:#d3dde8;transform:scaleX(0.9575);transform-origin:0 0;">-0.500</span>
<span class="t" style="left:86.56px;top:694px;font-size:10.47px;line-height:11px;color:#d3dde8;transform:scaleX(0.9575);transform-origin:0 0;">-1.000</span>
<span class="t" style="left:86.56px;top:714px;font-size:10.47px;line-height:11px;color:#d3dde8;transform:scaleX(0.9575);transform-origin:0 0;">-1.500</span>
<span class="t" style="left:86.56px;top:734px;font-size:10.47px;line-height:11px;color:#d3dde8;transform:scaleX(0.9575);transform-origin:0 0;">-2.000</span>
<span class="t" style="left:86.56px;top:755px;font-size:10.47px;line-height:11px;color:#d3dde8;transform:scaleX(0.9575);transform-origin:0 0;">-2.500</span>
<span class="t" style="left:86.56px;top:775px;font-size:10.47px;line-height:11px;color:#d3dde8;transform:scaleX(0.9575);transform-origin:0 0;">-3.000</span>
<span class="t" style="left:86.56px;top:795px;font-size:10.47px;line-height:11px;color:#d3dde8;transform:scaleX(0.9575);transform-origin:0 0;">-3.500</span>
<span class="t" style="left:86.56px;top:816px;font-size:10.47px;line-height:11px;color:#d3dde8;transform:scaleX(0.9575);transform-origin:0 0;">-4.000</span>
<span class="t" style="left:109.42px;top:828px;font-size:10.47px;line-height:11px;color:#d3dde8;transform:scaleX(0.9575);transform-origin:0 0;">1</span>
<span class="t" style="left:109.42px;top:890px;font-size:10.47px;line-height:11px;color:#d3dde8;transform:scaleX(0.9575);transform-origin:0 0;">0</span>
<span class="t" style="left:109.42px;top:903px;font-size:10.47px;line-height:11px;color:#d3dde8;transform:scaleX(0.9575);transform-origin:0 0;">1</span>
<span class="t" style="left:76.5px;top:656.6px;font-size:10px;color:#d3dde8;transform:translate(-50%,-50%) rotate(-90deg) scaleX(1);">g</span>
<span class="t" style="left:76.5px;top:865.2px;font-size:10.4px;color:#d3dde8;transform:translate(-50%,-50%) rotate(-90deg) scaleX(0.84);">Int 1</span>
<span class="t" style="left:76.5px;top:933.1px;font-size:10.4px;color:#d3dde8;transform:translate(-50%,-50%) rotate(-90deg) scaleX(0.9);">Int 2</span>
<!-- divider -->
<div class="abs" style="left:997.4px;top:460px;width:4px;height:487px;background:#f2f1f1;"></div>
<div class="abs" style="left:1001.3px;top:441px;width:4.2px;height:506px;background:#c2dcfb;"></div>
<div class="abs" style="left:1005.5px;top:460px;width:3px;height:487px;background:#fafafa;"></div>
<!-- general settings content -->
<div class="abs" style="left:1008px;top:462.4px;width:277px;height:485px;background:#fff;border-top:2px solid #8f8f8f;border-left:2px solid #8b8b8b;box-sizing:border-box;"></div>
<svg class="abs" style="left:0;top:0" width="1675" height="960" viewBox="0 0 1675 960">
<rect x="64.6" y="465.4" width="17.6" height="16.8" rx="1" fill="#cfe0f1" stroke="#4e9ce0" stroke-width="1.4"/>
<rect x="106.60000000000001" y="465.4" width="17.6" height="16.8" rx="1" fill="#cfe0f1" stroke="#4e9ce0" stroke-width="1.4"/>
<path d="M85.3 465.2V483" stroke="#a9a9a9" stroke-width="1.3"/>
<path d="M127.3 465.2V483" stroke="#a9a9a9" stroke-width="1.3"/>
<path d="M169.4 465.2V483" stroke="#a9a9a9" stroke-width="1.3"/>
<path d="M211.5 465.2V483" stroke="#a9a9a9" stroke-width="1.3"/>
<path d="M272.4 465.2V483" stroke="#a9a9a9" stroke-width="1.3"/>
<rect x="69.6" y="469" width="2.5" height="10" fill="#2d6295"/><rect x="74.4" y="469" width="2.5" height="10" fill="#2d6295"/>
<path d="M95.8 469.6V478.2 M91.6 473.9H100" stroke="#2d6295" stroke-width="1.5" stroke-linecap="round"/>
<path d="M94.8 470.5L95.8 469.4L96.8 470.5 M94.8 477.3L95.8 478.4L96.8 477.3 M92.7 472.9L91.6 473.9L92.7 474.9 M98.9 472.9L100 473.9L98.9 474.9" stroke="#2d6295" stroke-width="1.1" fill="none"/>
<circle cx="115.1" cy="474" r="2.9" fill="#dfeaf6" stroke="#2d6295" stroke-width="1.2"/>
<path d="M115.1 468.9V470.3 M115.1 477.7V478.9 M110.2 474H111.6 M118.6 474H120 M117.3 476.3L119.7 478.7" stroke="#2d6295" stroke-width="1.3" stroke-linecap="round"/>
<circle cx="137.2" cy="472.9" r="3.5" fill="none" stroke="#2d6295" stroke-width="1.3"/>
<path d="M139.79999999999998 475.6L142.79999999999998 478.4" stroke="#2d6295" stroke-width="1.5" stroke-linecap="round"/>
<path d="M135.39999999999998 472.9H139.0" stroke="#2d6295" stroke-width="1.1"/>
<path d="M137.2 471.1V474.7" stroke="#2d6295" stroke-width="1.1"/>
<circle cx="156.1" cy="472.9" r="3.5" fill="none" stroke="#2d6295" stroke-width="1.3"/>
<path d="M158.7 475.6L161.7 478.4" stroke="#2d6295" stroke-width="1.5" stroke-linecap="round"/>
<path d="M154.29999999999998 472.9H157.9" stroke="#2d6295" stroke-width="1.1"/>
<rect x="176.3" y="469.5" width="9.2" height="9.4" rx="0.8" fill="none" stroke="#cbd6e3" stroke-width="1.1"/>
<path d="M197.5 469H201.7V476L199.6 479.2L197.5 476Z" fill="#2d6295"/>
<path d="M218 469H227.5V478.6H218Z" fill="#2d6295"/><rect x="220.8" y="475.4" width="4.4" height="3.4" fill="#e8eef4"/><rect x="222" y="476.2" width="1.5" height="2.4" fill="#2d6295"/>
<path d="M238.2 469.4H243L245.6 472V479H238.2Z" fill="#e6edf4" stroke="#2d6295" stroke-width="1"/><circle cx="242.2" cy="475.6" r="1.9" fill="#f4f6f8" stroke="#2d6295" stroke-width="0.9"/><path d="M243.6 477L245.8 479.2" stroke="#2d6295" stroke-width="1"/>
<path d="M257.6 473.4V469.4H262L263.6 471V473.4" fill="#f0f4f8" stroke="#2d6295" stroke-width="1"/><rect x="255.4" y="473.6" width="10.2" height="5.2" rx="0.8" fill="#e6edf4" stroke="#2d6295" stroke-width="1.1"/><path d="M257 476.8H264" stroke="#2d6295" stroke-width="1.1"/>
<path d="M306.3 472.6H310.90000000000003L308.6 475Z" fill="#222"/>
<path d="M348.3 472.6H352.90000000000003L350.6 475Z" fill="#222"/>
<path d="M403.7 472.6H408.3L406 475Z" fill="#222"/>
<path d="M446.7 472.6H451.3L449 475Z" fill="#222"/>
<rect x="945.7" y="444.1" width="10.6" height="11.2" rx="1.6" fill="#eef1f5" stroke="#7e7e7e" stroke-width="1"/>
<path d="M949.2 452.4H952.8000000000001" stroke="#4a4a4a" stroke-width="1.2"/>
<rect x="965.5" y="444.1" width="10.6" height="11.2" rx="1.6" fill="#eef1f5" stroke="#7e7e7e" stroke-width="1"/>
<rect x="967.6" y="446.6" width="6.4" height="5.6" rx="1.2" fill="none" stroke="#4a4a4a" stroke-width="1.3"/>
<rect x="984.9" y="444.1" width="10.6" height="11.2" rx="1.6" fill="#eef1f5" stroke="#7e7e7e" stroke-width="1"/>
<path d="M988.0 447.4L992.4 452.2 M992.4 447.4L988.0 452.2" stroke="#3a3a3a" stroke-width="1"/>
<rect x="1258.5" y="444.1" width="10.6" height="11.2" rx="1.6" fill="#eef1f5" stroke="#7e7e7e" stroke-width="1"/>
<path d="M1262 452.4H1265.6" stroke="#4a4a4a" stroke-width="1.2"/>
<rect x="1278.1" y="444.1" width="10.6" height="11.2" rx="1.6" fill="#eef1f5" stroke="#7e7e7e" stroke-width="1"/>
<path d="M1281.1999999999998 447.4L1285.6 452.2 M1285.6 447.4L1281.1999999999998 452.2" stroke="#3a3a3a" stroke-width="1"/>
</svg>
<div class="abs" style="left:1090px;top:467.4px;width:71px;height:17.6px;background:#f0f0f0;"></div>
<div class="abs" style="left:1163px;top:467.4px;width:58px;height:17.6px;background:#f0f0f0;"></div>
<div class="abs" style="left:1015.2px;top:491.6px;width:259.6px;height:326.8px;background:#f0f0f0;"></div>
<svg class="abs" style="left:0;top:0" width="1675" height="960" viewBox="0 0 1675 960">
<path d="M1089 464.6V485" stroke="#6f6f6f" stroke-width="1.5"/>
<path d="M1161.7 467.4V484.8 M1221.2 467.4V484.8" stroke="#8a8a8a" stroke-width="1.4"/>
<path d="M1275.4 485V832.4H1009.8" fill="none" stroke="#7a7a7a" stroke-width="1.7"/>
<path d="M1274.6 492.2H1015.9V817.9H1274.6" fill="none" stroke="#cbcbcb" stroke-width="1.3"/>
</svg>
<div class="abs" style="left:1277.4px;top:478px;width:8px;height:469px;background:#c9c9c9;"></div>
<div class="abs" style="left:1277.4px;top:464px;width:8px;height:14px;background:#f1f1f1;"></div>
<svg class="abs" style="left:1277px;top:465px" width="8" height="12" viewBox="0 0 8 12"><path d="M3.2 7.8L6.3 4.6L9.4 7.8" fill="none" stroke="#505050" stroke-width="1.6"/></svg>
<svg class="abs" style="left:0;top:0" width="1675" height="960" viewBox="0 0 1675 960">
<rect x="1153.7" y="521.7" width="113.4" height="17.4" fill="#fff" stroke="#b3b3b3" stroke-width="1.4"/>
<rect x="1254.6" y="522.4" width="11.8" height="16" fill="#fcfcfc"/>
<path d="M1254.2 522V538.8" stroke="#bdbdbd" stroke-width="1.2"/>
<path d="M1257.4 528.4H1263.6L1260.5 531.6Z" fill="#111"/>
<rect x="1153.7" y="555.7" width="113.4" height="17.4" fill="#fff" stroke="#4545b2" stroke-width="1.4"/>
<rect x="1254.6" y="556.4" width="11.8" height="16" fill="#fbe3a4"/>
<path d="M1254.2 556V572.8" stroke="#4545b2" stroke-width="1.2"/>
<path d="M1257.4 562.4H1263.6L1260.5 565.6Z" fill="#111"/>
<rect x="1153.7" y="589.7" width="113.4" height="17.4" fill="#fff" stroke="#b3b3b3" stroke-width="1.4"/>
<rect x="1254.6" y="590.4" width="11.8" height="16" fill="#fcfcfc"/>
<path d="M1254.2 590V606.8" stroke="#bdbdbd" stroke-width="1.2"/>
<path d="M1257.4 596.4H1263.6L1260.5 599.6Z" fill="#111"/>
<rect x="1153.7" y="623.7" width="113.4" height="17.4" fill="#fff" stroke="#b3b3b3" stroke-width="1.4"/>
<rect x="1254.6" y="624.4" width="11.8" height="16" fill="#fcfcfc"/>
<path d="M1254.2 624V640.8" stroke="#bdbdbd" stroke-width="1.2"/>
<path d="M1257.4 630.4H1263.6L1260.5 633.6Z" fill="#111"/>
</svg>
<div class="abs" style="left:1151.2px;top:726px;width:11.4px;height:11.4px;background:#fff;border:1.2px solid #3c3c3c;box-sizing:border-box;"></div>
<svg class="abs" style="left:1024px;top:783px" width="100" height="14" viewBox="0 0 100 14"><circle cx="6.6" cy="7" r="5" fill="#fff" stroke="#444" stroke-width="1.1"/><circle cx="6.6" cy="7" r="2.7" fill="#222"/><circle cx="88.2" cy="7" r="5" fill="#fff" stroke="#444" stroke-width="1.1"/></svg>
<div class="abs" style="left:1179px;top:781.4px;width:48.6px;height:17px;background:#f0f0f0;border:1.2px solid #d0d0d0;box-sizing:border-box;"></div>
<div class="abs" style="left:1153px;top:846px;width:81.2px;height:17.4px;background:#efefef;border:1.3px solid #909090;box-sizing:border-box;"></div>
<div class="abs" style="left:1153px;top:894px;width:81.2px;height:17.4px;background:#efefef;border:1.3px solid #909090;box-sizing:border-box;"></div>
<div class="abs" style="left:1022px;top:941.2px;width:94.8px;height:8px;background:#003a6b;border:2.2px solid #cfcfcf;box-sizing:border-box;"></div>
<div class="abs" style="left:1154px;top:941.2px;width:94.8px;height:8px;background:#003a6b;border:2.2px solid #cfcfcf;box-sizing:border-box;"></div>
<span class="t" style="left:63.00px;top:444px;font-size:10.34px;line-height:11px;color:#4a76bd;font-weight:bold;transform:scaleX(0.9567);transform-origin:0 0;">Accelerometer</span>
<span class="t" style="left:1010.60px;top:444px;font-size:11.03px;line-height:12px;color:#4a80cc;font-weight:bold;transform:scaleX(0.9466);transform-origin:0 0;">General Settings</span>
<span class="t" style="left:279.40px;top:467px;font-size:10.54px;line-height:12px;color:#2b2b2b;transform:scaleX(0.9483);transform-origin:0 0;letter-spacing:-0.4px;">Axes</span>
<span class="t" style="left:319.00px;top:467px;font-size:10.54px;line-height:12px;color:#2b2b2b;transform:scaleX(0.9483);transform-origin:0 0;letter-spacing:0px;">Units</span>
<span class="t" style="left:360.80px;top:467px;font-size:10.54px;line-height:12px;color:#2b2b2b;transform:scaleX(0.9483);transform-origin:0 0;letter-spacing:0px;">Interrupt</span>
<span class="t" style="left:416.40px;top:467px;font-size:10.54px;line-height:12px;color:#2b2b2b;transform:scaleX(0.9483);transform-origin:0 0;letter-spacing:0.03px;">Color</span>
<span class="t" style="left:459.40px;top:467px;font-size:10.54px;line-height:12px;color:#2b2b2b;transform:scaleX(0.9483);transform-origin:0 0;letter-spacing:0.05px;">Reset</span>
<span class="t" style="left:1018.00px;top:469px;font-size:10.61px;line-height:12px;color:#151515;transform:scaleX(0.9294);transform-origin:0 0;">Accelerometer</span>
<span class="t" style="left:1093.00px;top:470px;font-size:10.61px;line-height:12px;color:#151515;transform:scaleX(0.9351);transform-origin:0 0;">Magnetometer</span>
<span class="t" style="left:1168.60px;top:470px;font-size:10.61px;line-height:12px;color:#151515;transform:scaleX(0.9235);transform-origin:0 0;">Gyroscope</span>
<span class="t" style="left:1025.60px;top:497px;font-size:10.20px;line-height:11px;color:#151515;font-weight:bold;transform:scaleX(0.9613);transform-origin:0 0;">Accelerometer settings</span>
<span class="t" style="left:1025.80px;top:523px;font-size:10.61px;line-height:12px;color:#151515;transform:scaleX(0.9327);transform-origin:0 0;">Power Mode</span>
<span class="t" style="left:1025.80px;top:557px;font-size:10.61px;line-height:12px;color:#151515;transform:scaleX(0.9421);transform-origin:0 0;">Range</span>
<span class="t" style="left:1025.80px;top:591px;font-size:10.61px;line-height:12px;color:#151515;transform:scaleX(0.9421);transform-origin:0 0;">Bandwidth</span>
<span class="t" style="left:1025.80px;top:625px;font-size:10.61px;line-height:12px;color:#151515;transform:scaleX(0.9280);transform-origin:0 0;">Output data rate</span>
<span class="t" style="left:1157.40px;top:524px;font-size:10.61px;line-height:12px;color:#151515;transform:scaleX(0.9421);transform-origin:0 0;">Normal</span>
<span class="t" style="left:1157.40px;top:558px;font-size:10.61px;line-height:12px;color:#151515;transform:scaleX(0.9421);transform-origin:0 0;">4g</span>
<span class="t" style="left:1157.40px;top:592px;font-size:10.61px;line-height:12px;color:#151515;transform:scaleX(0.9421);transform-origin:0 0;">Normal mode</span>
<span class="t" style="left:1157.40px;top:626px;font-size:10.61px;line-height:12px;color:#151515;transform:scaleX(0.9421);transform-origin:0 0;">100 Hz</span>
<span class="t" style="left:1026.00px;top:695px;font-size:10.20px;line-height:11px;color:#151515;font-weight:bold;transform:scaleX(0.9519);transform-origin:0 0;">Accelerometer undersampling settings</span>
<span class="t" style="left:1026.60px;top:726px;font-size:10.61px;line-height:12px;color:#151515;transform:scaleX(0.9777);transform-origin:0 0;">Undersampling</span>
<span class="t" style="left:1026.00px;top:760px;font-size:10.20px;line-height:11px;color:#151515;font-weight:bold;transform:scaleX(0.9602);transform-origin:0 0;">Accelerometer sampling rate</span>
<span class="t" style="left:1039.00px;top:784px;font-size:10.61px;line-height:12px;color:#151515;transform:scaleX(0.9634);transform-origin:0 0;">Default</span>
<span class="t" style="left:1121.00px;top:784px;font-size:10.61px;line-height:12px;color:#151515;transform:scaleX(0.9421);transform-origin:0 0;">Custom</span>
<span class="t" style="left:1182.00px;top:784px;font-size:10.61px;line-height:12px;color:#9a9a9a;transform:scaleX(0.9421);transform-origin:0 0;">100</span>
<span class="t" style="left:1232.60px;top:784px;font-size:10.61px;line-height:12px;color:#151515;transform:scaleX(0.9421);transform-origin:0 0;">Hz</span>
<span class="t" style="left:1026.00px;top:849px;font-size:10.61px;line-height:12px;color:#151515;transform:scaleX(0.9421);transform-origin:0 0;">Temperature</span>
<span class="t" style="left:1155.60px;top:849px;font-size:10.61px;line-height:12px;color:#303030;transform:scaleX(0.9421);transform-origin:0 0;">25.6152</span>
<span class="t" style="left:1241.00px;top:849px;font-size:10.61px;line-height:12px;color:#151515;transform:scaleX(0.9421);transform-origin:0 0;">°C</span>
<span class="t" style="left:1025.80px;top:897px;font-size:10.61px;line-height:12px;color:#151515;transform:scaleX(0.9421);transform-origin:0 0;">Error status</span>
<span class="t" style="left:1155.60px;top:897px;font-size:10.61px;line-height:12px;color:#303030;transform:scaleX(0.9421);transform-origin:0 0;">0</span>
<div class="abs" style="left:1285px;top:425px;width:390px;height:525px;background:#fff;"></div>
<!-- slideshow controls -->
<svg class="abs" style="left:0;top:910px" width="230" height="40" viewBox="0 910 230 40">
<circle cx="14" cy="928" r="13.8" fill="rgba(255,255,255,0.0)" stroke="#b6bbc2" stroke-width="1.1"/>
<circle cx="51.6" cy="928" r="13.8" fill="none" stroke="#b6bbc2" stroke-width="1.1"/>
<circle cx="90" cy="927.8" r="13.9" fill="none" stroke="#8093aa" stroke-width="1.1"/>
<circle cx="128" cy="927.8" r="13.9" fill="none" stroke="#8093aa" stroke-width="1.1"/>
<circle cx="166" cy="927.8" r="13.9" fill="none" stroke="#8093aa" stroke-width="1.1"/>
<circle cx="204" cy="927.8" r="13.9" fill="none" stroke="#8093aa" stroke-width="1.1"/>
<path d="M16.4 923.6L9.6 928L16.4 932.6Z" fill="none" stroke="#c4c6ca" stroke-width="1"/>
<path d="M49.6 923.6L56.4 928L49.6 932.6Z" fill="none" stroke="#c4c6ca" stroke-width="1"/>
<path d="M96.3 919.7L98.5 921.9L86.7 933.7L84.5 931.5Z" fill="#7b93b0"/><path d="M84.3 931.9L86.3 933.9L82.2 935.9Z" fill="#9aabbd"/>
<rect x="119.9" y="920.2" width="5.7" height="5.9" fill="#7b93b0"/><rect x="127" y="920.2" width="6.1" height="3.4" fill="#7b93b0"/><rect x="119.9" y="927.3" width="4.3" height="4.9" fill="#7b93b0"/>
<rect x="126" y="926" width="9.2" height="9.1" fill="#003a6b" stroke="#8ea3bc" stroke-width="1.3"/>
<circle cx="163.8" cy="925.9" r="5.2" fill="none" stroke="#aebccd" stroke-width="1.6"/><path d="M168 930.2L172.8 934.6" stroke="#aebccd" stroke-width="2.4" stroke-linecap="round"/>
<circle cx="199.6" cy="928" r="1.5" fill="#c2cedc"/>
<circle cx="204" cy="928" r="1.5" fill="#c2cedc"/>
<circle cx="208.4" cy="928" r="1.5" fill="#c2cedc"/>
</svg>
<!-- black bars -->
<div class="abs" style="left:0;top:0;width:1675px;height:1.9px;background:#000;"></div>
<div class="abs" style="left:0;top:946.8px;width:1675px;height:14px;background:#000;"></div>
</body></html>
